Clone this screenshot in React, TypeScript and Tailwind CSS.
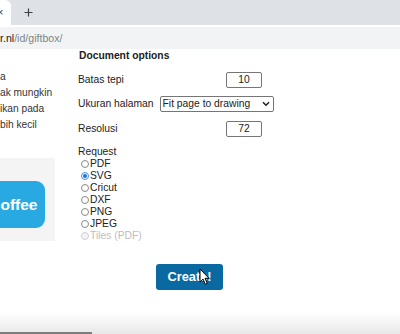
export default function App() {
  const radios = [
    { label: "PDF", checked: false, disabled: false },
    { label: "SVG", checked: true, disabled: false },
    { label: "Cricut", checked: false, disabled: false },
    { label: "DXF", checked: false, disabled: false },
    { label: "PNG", checked: false, disabled: false },
    { label: "JPEG", checked: false, disabled: false },
    { label: "Tiles (PDF)", checked: false, disabled: true },
  ];
  return (
    <div className="relative w-[400px] h-[334px] overflow-hidden bg-white font-['Liberation_Sans',Arial,sans-serif] text-[#222]">
      {/* Tab strip */}
      <div className="relative h-[25px] bg-[#dee1e6]">
        <div className="absolute left-0 top-0 w-[11px] h-[25px] bg-white rounded-tr-[6px] flex items-center">
          <span className="text-[11px] leading-none text-[#444] ml-[-3px] mt-[-1px]">×</span>
        </div>
        <svg className="absolute left-[24px] top-[8px]" width="9" height="9" viewBox="0 0 9 9">
          <path d="M4.5 0.5v8M0.5 4.5h8" stroke="#3c4043" strokeWidth="1.2" />
        </svg>
      </div>
      {/* Toolbar */}
      <div className="h-[25px] bg-white pt-[2px]">
        <div className="h-[22px] bg-[#f1f3f4] flex items-center text-[10.6px] leading-none">
          <span className="text-[#202124]">r.nl</span>
          <span className="text-[#80868b]">/id/giftbox/</span>
        </div>
      </div>
      {/* Page */}
      <div className="flex h-[284px] overflow-hidden">
        <div className="w-[78px] shrink-0 overflow-hidden">
          <div className="text-[10.2px] leading-[16px] text-[#333] mt-[-13px] whitespace-nowrap">
            <div>ually anya tidak</div>
            <div>&nbsp;</div>
            <div>a</div>
            <div>ak mungkin</div>
            <div>ikan pada</div>
            <div>bih kecil</div>
          </div>
          <div className="mt-[25px] w-[55px] h-[83px] bg-[#f4f4f4] pt-[23px]">
            <div className="w-[45px] h-[47px] bg-[#29a9e1] rounded-r-[9px] flex items-center overflow-hidden">
              <span className="shrink-0 ml-[-8.2px] text-white font-bold text-[15.5px] leading-none whitespace-nowrap">coffee</span>
            </div>
          </div>
        </div>
        <div className="flex-1 text-[10.3px]">
          <div className="font-bold leading-[12px] pl-[1px]">Document options</div>
          <div className="flex items-center h-[16px] mt-[10px]">
            <span className="w-[148px]">Batas tepi</span>
            <div className="w-[36px] h-[16px] border border-[#767676] rounded-[2px] flex items-center justify-center">10</div>
          </div>
          <div className="flex items-center h-[16px] mt-[8px]">
            <span>Ukuran halaman</span>
            <div className="ml-[6px] w-[114px] h-[16px] border border-[#767676] rounded-[2px] flex items-center pl-[2px] pr-[3px] justify-between">
              <span>Fit page to drawing</span>
              <svg width="8" height="6" viewBox="0 0 8 6">
                <path d="M1 1.2l3 3 3-3" stroke="#222" strokeWidth="1.6" fill="none" />
              </svg>
            </div>
          </div>
          <div className="flex items-center h-[16px] mt-[9px]">
            <span className="w-[148px]">Resolusi</span>
            <div className="w-[36px] h-[16px] border border-[#767676] rounded-[2px] flex items-center justify-center">72</div>
          </div>
          <div className="leading-[12px] mt-[9px]">Request</div>
          <div className="flex flex-col">
            {radios.map((r) => (
              <div key={r.label} className={"flex items-center h-[12px] leading-[12px] pl-[3px] " + (r.disabled ? "text-[#bdbdbd]" : "")}>
                {r.checked ? (
                  <span className="w-[8px] h-[8px] rounded-full border border-[#3d8fe8] bg-white flex items-center justify-center">
                    <span className="w-[4px] h-[4px] rounded-full bg-[#1a6fd8]" />
                  </span>
                ) : (
                  <span className={"w-[8px] h-[8px] rounded-full border " + (r.disabled ? "border-[#d0d0d0] bg-[#f3f3f3]" : "border-[#8a8a8a] bg-white")} />
                )}
                <span className="ml-[1px]">{r.label}</span>
              </div>
            ))}
          </div>
          <div className="ml-[78px] mt-[22px] w-[67px] h-[26px] rounded-[3px] bg-[#0b69a1] flex items-center justify-center text-white font-bold text-[12.8px]">
            Create!
          </div>
        </div>
      </div>
      {/* cursor */}
      <svg className="absolute left-[199px] top-[268px]" width="12" height="18" viewBox="0 0 12 18">
        <path d="M1 1 L1 14 L4 11 L6.3 16.3 L8.3 15.4 L6 10.3 L10 10.3 Z" fill="white" stroke="black" strokeWidth="1" strokeLinejoin="round" />
      </svg>
      {/* bottom fade */}
      <div className="absolute bottom-0 left-0 right-0 h-[22px] bg-gradient-to-b from-white to-[#e8e8e8]" />
      <div className="absolute bottom-0 left-0 w-[92px] h-[2px] bg-[#7d7d7d]" />
    </div>
  );
}
